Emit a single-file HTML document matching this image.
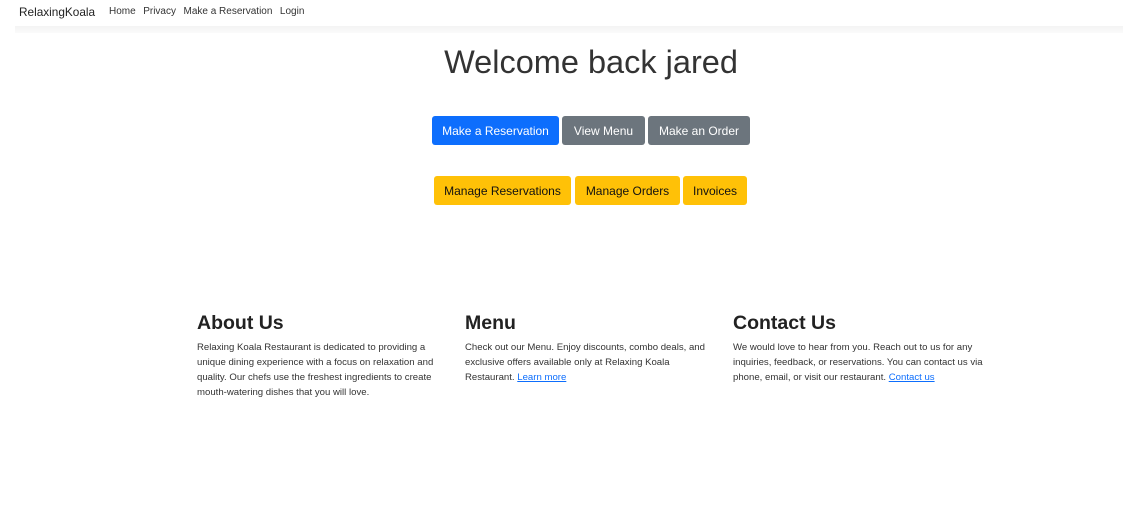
<!DOCTYPE html>
<html><head><style>
body{margin:0;background:#fff;font-family:"Liberation Sans",sans-serif;color:#212529;width:1123px;height:528px;overflow:hidden;position:relative}
.nav{position:absolute;left:0;top:0;width:1123px;height:26px}
.shadow{position:absolute;left:15px;top:26px;width:1108px;height:7px;background:linear-gradient(#f3f3f3,#fafafa)}
.brand{position:absolute;left:19px;top:5px;font-size:11.8px;color:#222}
.links{position:absolute;left:109px;top:6px;font-size:10px;color:#333}
.links span{margin-right:7.5px}
h1{position:absolute;left:0;width:1182px;top:44px;margin:0;text-align:center;font-weight:300;font-size:32.5px;color:#333}
.b{position:absolute;height:29px;line-height:30px;font-size:12px;text-align:center;border-radius:3px;color:#fff}
.p{background:#0d6efd}.s{background:#6c757d}.w{background:#ffc107;color:#111}
.col{position:absolute;top:312px;width:255px}
.col h2{margin:0;font-size:19.5px;font-weight:bold;color:#222;line-height:22px}
.col p{margin:6px 0 0;font-size:9.6px;line-height:15px;color:#333}
a{color:#0d6efd;text-decoration:underline}
</style></head><body>
<div class="nav"><div class="brand">RelaxingKoala</div><div class="links"><span>Home</span><span>Privacy</span><span>Make a Reservation</span><span>Login</span></div></div>
<div class="shadow"></div>
<h1>Welcome back jared</h1>
<div class="b p" style="left:432px;top:116px;width:127px">Make a Reservation</div>
<div class="b s" style="left:562px;top:116px;width:83px">View Menu</div>
<div class="b s" style="left:648px;top:116px;width:102px">Make an Order</div>
<div class="b w" style="left:434px;top:176px;width:137px">Manage Reservations</div>
<div class="b w" style="left:575px;top:176px;width:105px">Manage Orders</div>
<div class="b w" style="left:683px;top:176px;width:64px">Invoices</div>
<div class="col" style="left:197px"><h2>About Us</h2><p>Relaxing Koala Restaurant is dedicated to providing a unique dining experience with a focus on relaxation and quality. Our chefs use the freshest ingredients to create mouth-watering dishes that you will love.</p></div>
<div class="col" style="left:465px"><h2>Menu</h2><p>Check out our Menu. Enjoy discounts, combo deals, and exclusive offers available only at Relaxing Koala Restaurant. <a>Learn more</a></p></div>
<div class="col" style="left:733px"><h2>Contact Us</h2><p>We would love to hear from you. Reach out to us for any inquiries, feedback, or reservations. You can contact us via phone, email, or visit our restaurant. <a>Contact us</a></p></div>
</body></html>
